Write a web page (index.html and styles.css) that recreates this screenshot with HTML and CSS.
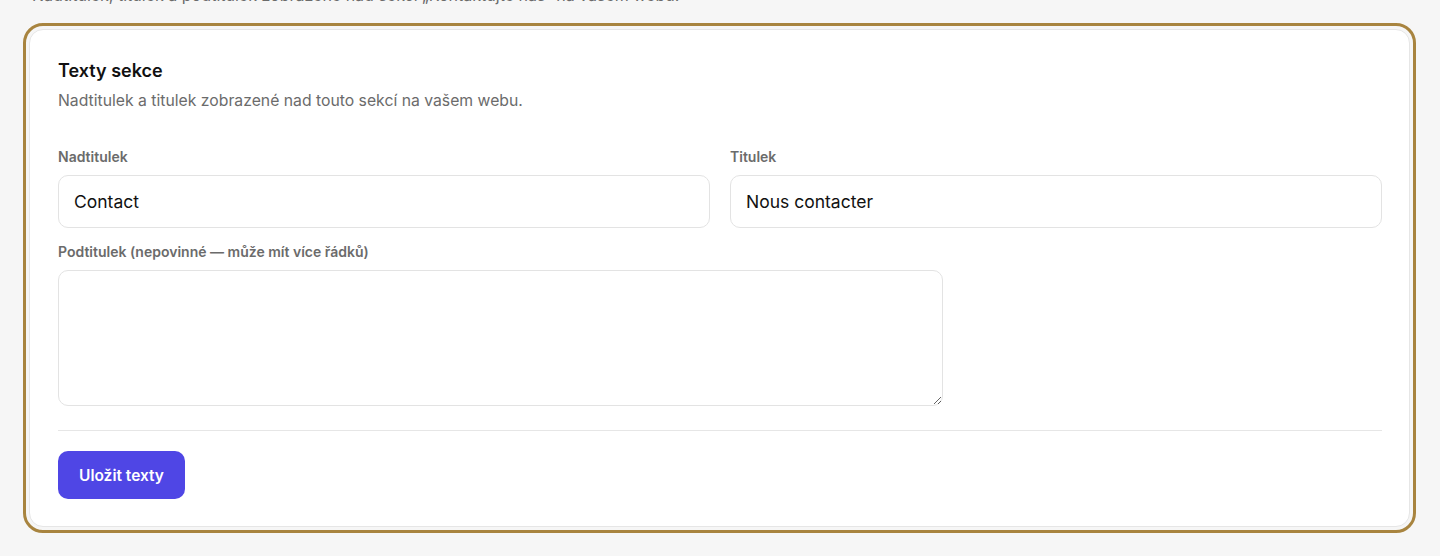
FILE: index.html
```html
<!DOCTYPE html>
<html lang="cs">
<head>
<meta charset="utf-8">
<title>Texty sekce</title>
<link rel="stylesheet" href="styles.css">
</head>
<body>
<div class="page">
  <p class="intro">Nadtitulek, titulek a podtitulek zobrazené nad sekcí „Kontaktujte nás“ na vašem webu.</p>
  <section class="card">
    <h2 class="card-title">Texty sekce</h2>
    <p class="card-desc">Nadtitulek a titulek zobrazené nad touto sekcí na vašem webu.</p>
    <div class="grid">
      <label class="field">
        <span class="label">Nadtitulek</span>
        <input class="input" type="text" value="Contact">
      </label>
      <label class="field">
        <span class="label">Titulek</span>
        <input class="input" type="text" value="Nous contacter">
      </label>
    </div>
    <label class="field field-area">
      <span class="label">Podtitulek (nepovinné — může mít více řádků)</span>
      <textarea class="textarea"></textarea>
    </label>
    <div class="divider"></div>
    <button class="btn" type="button">Uložit texty</button>
  </section>
</div>
</body>
</html>
```
FILE: styles.css
```css
* { box-sizing: border-box; }
html, body { margin: 0; background: #f6f6f6; }
body {
  font-family: Inter, "Noto Sans", "Liberation Sans", sans-serif;
  color: #111;
}
.page {
  padding: 0 30px 40px 29px;
}
.intro {
  margin: -15px 0 0 3px;
  font-size: 16px;
  line-height: 20px;
  color: #6b6b6b;
  white-space: nowrap;
}
.card {
  margin-top: 24px;
  background: #fff;
  border: 1px solid #e6e6e6;
  border-radius: 14px;
  outline: 3px solid #a8843f;
  outline-offset: 3px;
  padding: 28px 27px 27px 28px;
}
.card-title {
  margin: 0;
  font-size: 18px;
  line-height: 26px;
  font-weight: 600;
  color: #111;
}
.card-desc {
  margin: 6px 0 0;
  font-size: 15.75px;
  line-height: 22px;
  color: #6b6b6b;
}
.grid {
  margin-top: 35px;
  display: grid;
  grid-template-columns: 1fr 1fr;
  gap: 20px;
}
.field {
  display: flex;
  flex-direction: column;
}
.label {
  font-size: 14px;
  line-height: 19px;
  font-weight: 600;
  color: #6b6b6b;
  margin-bottom: 9px;
}
.input {
  height: 53px;
  border: 1px solid #e3e3e3;
  border-radius: 10px;
  padding: 0 15px;
  font-family: inherit;
  font-size: 17.5px;
  color: #111;
  background: #fff;
  outline: none;
}
.field-area {
  margin-top: 14px;
  width: 885px;
}
.textarea {
  height: 136px;
  border: 1px solid #e3e3e3;
  border-radius: 10px;
  padding: 12px 15px;
  font-family: inherit;
  font-size: 16px;
  resize: both;
  background: #fff;
  outline: none;
}
.divider {
  margin-top: 24px;
  height: 1px;
  background: #e6e6e6;
}
.btn {
  margin-top: 20px;
  height: 48px;
  padding: 0 21px;
  border: none;
  border-radius: 10px;
  background: #4f46e5;
  color: #fff;
  font-family: inherit;
  font-size: 15.5px;
  font-weight: 600;
  cursor: pointer;
}
```
